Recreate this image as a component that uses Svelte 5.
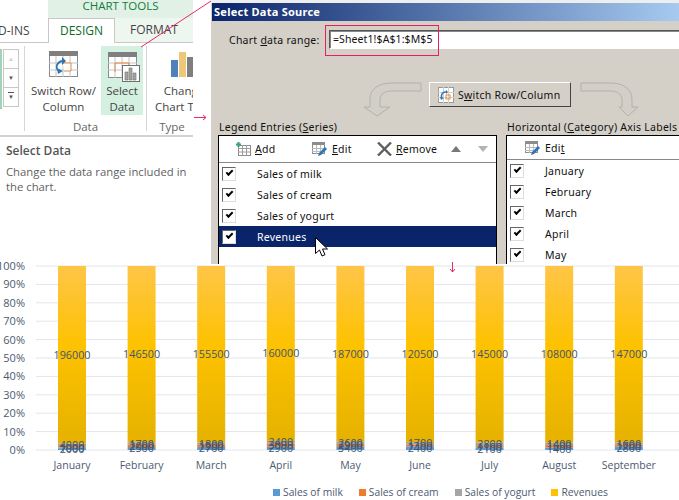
<script lang="ts">
	const months = [
		{ name: 'January', milk: 2000, cream: 1000, yogurt: 4000, rev: 196000 },
		{ name: 'February', milk: 2500, cream: 2000, yogurt: 1700, rev: 146500 },
		{ name: 'March', milk: 2700, cream: 1900, yogurt: 1800, rev: 155500 },
		{ name: 'April', milk: 2900, cream: 3000, yogurt: 2400, rev: 160000 },
		{ name: 'May', milk: 3400, cream: 2900, yogurt: 2600, rev: 187000 },
		{ name: 'June', milk: 2400, cream: 1300, yogurt: 1700, rev: 120500 },
		{ name: 'July', milk: 2100, cream: 1100, yogurt: 2800, rev: 145000 },
		{ name: 'August', milk: 1400, cream: 1600, yogurt: 1400, rev: 108000 },
		{ name: 'September', milk: 2800, cream: 1700, yogurt: 1600, rev: 147000 }
	];
	const top = 266;
	const h = 184;
	const bars = months.map((m, i) => {
		const total = m.milk + m.cream + m.yogurt + m.rev;
		const px = (v: number) => (v / total) * h;
		const milk = px(m.milk), cream = px(m.cream), yogurt = px(m.yogurt);
		return {
			...m,
			x: 58 + i * 69.6,
			milkH: milk, creamH: cream, yogurtH: yogurt,
			revH: h - milk - cream - yogurt
		};
	});
	const ticks = [100, 90, 80, 70, 60, 50, 40, 30, 20, 10, 0];
	const legend = [
		{ label: 'Sales of milk', color: '#5b9bd5' },
		{ label: 'Sales of cream', color: '#ed7d31' },
		{ label: 'Sales of yogurt', color: '#a5a5a5' },
		{ label: 'Revenues', color: '#ffc000' }
	];
	const series = ['Sales of milk', 'Sales of cream', 'Sales of yogurt', 'Revenues'];
	const cats = ['January', 'February', 'March', 'April', 'May'];
</script>

<div class="page">
	<svg class="chart" width="679" height="236" viewBox="0 264 679 236">
		<defs>
			<linearGradient id="rev" x1="0" y1="0" x2="0" y2="1">
				<stop offset="0" stop-color="#ffc548"/>
				<stop offset=".45" stop-color="#fdc200"/>
				<stop offset="1" stop-color="#e6b200"/>
			</linearGradient>
		</defs>
		{#each ticks as t, i}
			<line x1="36" x2="679" y1={top + i * 18.4} y2={top + i * 18.4} stroke="#e1e5ec" stroke-width="1"/>
			<text class="tick" x="25" y={top + i * 18.4 + 4} text-anchor="end">{t}%</text>
		{/each}
		{#each bars as b}
			<rect x={b.x} y={top} width="28" height={b.revH} fill="url(#rev)"/>
			<rect x={b.x} y={top + b.revH} width="28" height={b.yogurtH} fill="#a5a5a5"/>
			<rect x={b.x} y={top + b.revH + b.yogurtH} width="28" height={b.creamH} fill="#ed7d31"/>
			<rect x={b.x} y={top + b.revH + b.yogurtH + b.creamH} width="28" height={b.milkH} fill="#5b9bd5"/>
			<text class="lab" x={b.x + 14} y={top + b.revH / 2 + 4}>{b.rev}</text>
			<text class="lab" x={b.x + 14} y={top + b.revH + b.yogurtH / 2 + 4}>{b.yogurt}</text>
			<text class="lab" x={b.x + 14} y={top + b.revH + b.yogurtH + b.creamH / 2 + 4}>{b.cream}</text>
			<text class="lab" x={b.x + 14} y={top + h - b.milkH / 2 + 4}>{b.milk}</text>
			<text class="cat" x={b.x + 14} y="469">{b.name}</text>
		{/each}
	</svg>

	<div class="top">
		<div class="ribbon">
			<div class="context">CHART TOOLS</div>
			<div class="tabs">
				<span class="tab-cut">D-INS</span>
				<span class="tab-on">DESIGN</span>
				<span class="tab-off">FORMAT</span>
			</div>
			<div class="groups">
				<div class="gallery">
					<div class="swatch"></div>
					<div class="scroll">
						<span class="sb">▲</span>
						<span class="sb dark">▼</span>
						<span class="sb dark more">▼</span>
					</div>
				</div>
				<div class="group data">
					<div class="btns">
						<div class="btn">
							<svg width="30" height="27" viewBox="0 0 30 27">
								<rect x=".5" y=".5" width="28" height="25" fill="#fff" stroke="#8a8a8a"/>
								<rect x="0" y="0" width="29" height="5" fill="#7f7f7f"/>
								<path d="M0 12h29M0 19h29M7 5v21M14 5v21M21 5v21" stroke="#c4c4c4"/>
								<path d="M14 12h8v8h-7" fill="#fff" stroke="#e8893a"/>
								<path d="M12 20c-4 0-5-3-4-6 1-2 2-4 6-4" fill="none" stroke="#2e75b6" stroke-width="1.800"/>
								<path d="M13 6l4 4-4 4zM8 17l6 3-5 3z" fill="#2e75b6"/>
							</svg>
							<span>Switch Row/<br/>Column</span>
						</div>
						<div class="btn active">
							<svg class="sel-ico" width="32" height="30" viewBox="0 0 32 30">
								<rect x=".5" y=".5" width="28" height="25" fill="#fff" stroke="#8a8a8a"/>
								<rect x="0" y="0" width="29" height="5" fill="#7f7f7f"/>
								<path d="M0 11h29M0 18h29M7 5v21M14 5v21M21 5v21" stroke="#c4c4c4"/>
								<path d="M7 20v-9h14v5" fill="none" stroke="#e8893a"/>
								<rect x="14.500" y="13.500" width="17" height="16" fill="#fff" stroke="#6f6f6f"/>
								<path d="M17 28v-8h3v8zM21 28V16h3v12zM25 28v-7h3v7z" fill="#a6a6a6" stroke="#6f6f6f" stroke-width=".6"/>
							</svg>
							<span>Select<br/>Data</span>
						</div>
					</div>
					<div class="group-name">Data</div>
				</div>
				<div class="group type">
					<div class="btn clip">
						<svg width="27" height="27" viewBox="0 0 27 27">
							<rect x="0" y="9" width="7" height="17" fill="#4f81bd"/>
							<rect x="8" y="1" width="7" height="25" fill="#edc87a"/>
							<rect x="16" y="6" width="7" height="20" fill="#7f7f7f"/>
						</svg>
						<span>Change<br/>Chart Type</span>
					</div>
					<div class="group-name type-name">Type</div>
				</div>
			</div>
			<div class="tip">
				<b>Select Data</b>
				<p>Change the data range included in the chart.</p>
			</div>
		</div>

		<div class="dialog">
			<div class="title">Select Data Source</div>
			<div class="range">
				<label for="rng">Chart <u>d</u>ata range:</label>
				<div class="input" id="rng">=Sheet1!$A$1:$M$5</div>
			</div>
			<div class="switch-row">
				<button class="switch">
					<svg width="16" height="16" viewBox="0 0 16 16">
						<rect x=".5" y=".5" width="15" height="15" fill="#fff" stroke="#9a9a9a"/>
						<path d="M0 5.500h16M0 10.500h16M5.500 0v16M10.500 0v16" stroke="#d0d0d0"/>
						<path d="M4 11a4 4 0 0 1 4-6" fill="none" stroke="#2e75b6" stroke-width="1.500"/>
						<path d="M8 3l2 2-2 2zM2 10l4 1-3 2z" fill="#2e75b6"/>
						<rect x="8" y="8" width="4" height="4" fill="none" stroke="#e8893a"/>
					</svg>
					<span>S<u>w</u>itch Row/Column</span>
				</button>
			</div>
			<div class="lists">
				<section class="col-left">
					<h4>Legend Entries (<u>S</u>eries)</h4>
					<div class="box">
						<div class="tools">
							<span class="tool">
								<svg width="15" height="15" viewBox="0 0 15 15">
									<rect x="2.500" y="3.500" width="12" height="10" fill="#fff" stroke="#8c8c8c"/>
									<path d="M2 6.500h12M2 10h12M6.500 3v11M10.500 3v11" stroke="#9c9c9c"/>
									<path d="M0 2.500h5M2.500 0v5" stroke="#3aa07a" stroke-width="2"/>
								</svg>
								<span><u>A</u>dd</span>
							</span>
							<span class="tool">
								<svg width="16" height="16" viewBox="0 0 16 16">
									<rect x=".5" y="1.500" width="12" height="11" fill="#fff" stroke="#8c8c8c"/>
									<rect x="0" y="1" width="13" height="3" fill="#8c8c8c"/>
									<path d="M0 7.500h12M0 10.500h12M4.500 4v9M8.500 4v9" stroke="#bbb"/>
									<path d="M6 15l1-3 6-6 2 2-6 6z" fill="#2e75b6"/>
								</svg>
								<span><u>E</u>dit</span>
							</span>
							<span class="tool">
								<svg width="15" height="14" viewBox="0 0 15 14">
									<path d="M1 0.500l13 13M14 0.500l-13 13" stroke="#5f5f5f" stroke-width="2.400"/>
								</svg>
								<span><u>R</u>emove</span>
							</span>
							<span class="tri up"></span>
							<span class="tri down"></span>
						</div>
						<ul>
							{#each series as s}
								<li class:sel={s === 'Revenues'}><span class="chk"></span>{s}</li>
							{/each}
						</ul>
						<svg class="cursor" width="13" height="21" viewBox="0 0 13 21">
							<path d="M.5.500v16l4-3.500 2.500 6 3-1.300-2.500-5.700h5z" fill="#fff" stroke="#000"/>
						</svg>
					</div>
				</section>
				<section class="col-right">
					<h4>Horizontal (<u>C</u>ategory) Axis Labels</h4>
					<div class="box">
						<div class="tools short">
							<span class="tool">
								<svg width="16" height="16" viewBox="0 0 16 16">
									<rect x=".5" y="1.500" width="12" height="11" fill="#fff" stroke="#8c8c8c"/>
									<rect x="0" y="1" width="13" height="3" fill="#8c8c8c"/>
									<path d="M0 7.500h12M0 10.500h12M4.500 4v9M8.500 4v9" stroke="#bbb"/>
									<path d="M6 15l1-3 6-6 2 2-6 6z" fill="#2e75b6"/>
								</svg>
								<span>Edi<u>t</u></span>
							</span>
						</div>
						<ul>
							{#each cats as c}
								<li><span class="chk"></span>{c}</li>
							{/each}
						</ul>
					</div>
				</section>
			</div>
			<svg class="bend" width="280" height="36" viewBox="0 0 280 36">
				<path d="M60 1v8H30c-7 0-11 4-11 9v7h10L16 34 3 25h6v-8C9 7 18 1 30 1z" fill="#d2cfc8" stroke="#b4b1aa"/>
				<path d="M220 1v8h30c7 0 11 4 11 9v7h-3l9 9 10-9h-6v-8c0-10-9-16-21-16z" fill="#d2cfc8" stroke="#b4b1aa"/>
			</svg>
		</div>
	</div>

	<div class="legend">
		{#each legend as l}
			<span class="key"><i style="background:{l.color}"></i>{l.label}</span>
		{/each}
	</div>

	<!-- pink annotations drawn over the collage -->
	<svg class="notes" width="679" height="500" viewBox="0 0 679 500">
		<path d="M211 1L141 47" stroke="#e6296f" fill="none"/>
		<path d="M194 117.500h12M203 115l3 2.500-3 2.500" stroke="#e6296f" fill="none"/>
		<path d="M452.500 262v10M450 269l2.500 3 2.500-3" stroke="#e6296f" fill="none"/>
		<rect x="325.500" y="25.500" width="113" height="30" fill="none" stroke="#e6205f"/>
	</svg>
</div>

<style>
	:global(body) { background: #fff; }
	.page { position: relative; width: 679px; height: 500px; overflow: hidden; background: #fff; font-family: "Open Sans", sans-serif; }
	.top { position: relative; display: flex; height: 264px; }

	/* ribbon */
	.ribbon { width: 193px; margin-right: 18px; flex: none; color: #444; font-size: 11.500px; overflow: hidden; }
	.context { margin-left: 48px; height: 18px; line-height: 11px; background: #e1f1e5; color: #107c41; font-size: 11.500px; text-align: center; overflow: hidden; }
	.tabs { display: flex; height: 25px; align-items: center; border-bottom: 1px solid #c8c8c8; position: relative; box-sizing: border-box; }
	.tab-cut { width: 48px; font-size: 12px; text-indent: -2px; flex: none; }
	.tab-on { width: 67px; height: 25px; line-height: 24px; text-align: center; color: #0e6b1f; background: #fff; border: 1px solid #c8c8c8; border-bottom: none; box-sizing: border-box; position: relative; top: 0; font-size: 12px; flex: none; }
	.tab-off { flex: 1; height: 24px; line-height: 24px; text-align: center; background: #edf6ef; font-size: 12px; }
	.groups { display: flex; height: 92px; border-bottom: 2px solid #d2d2d2; box-sizing: content-box; }
	.gallery { width: 25px; height: 85px; flex: none; display: flex; box-sizing: border-box; border-right: 1px solid #d6d6d6; margin-top: 3px; padding-top: 3px; }
	.swatch { width: 2px; height: 58px; background: #9fd4b8; border: solid #bbb; border-width: 1px 0; }
	.scroll { width: 16px; height: 58px; margin-left: 1px; display: flex; flex-direction: column; border: 1px solid #c8c8c8; box-sizing: border-box; }
	.sb { flex: 1; font-size: 6px; line-height: 18px; text-align: center; color: #cfcfcf; border-bottom: 1px solid #c8c8c8; }
	.sb.dark { color: #555; }
	.sb.more { border-bottom: none; text-decoration: overline; }
	.group { display: flex; flex-direction: column; }
	.data { width: 122px; flex: none; box-sizing: border-box; border-right: 1px solid #d6d6d6; height: 85px; margin-top: 3px; }
	.btns { display: flex; gap: 4px; padding-left: 5px; height: 69px; flex: none; }
	.btn { display: flex; flex-direction: column; align-items: center; line-height: 16px; text-align: center; white-space: nowrap; padding-top: 5px; box-sizing: border-box; height: 69px; }
	.btn svg { flex: none; margin-bottom: 5px; }
	.btn .sel-ico { margin-bottom: 1px; margin-top: 1px; margin-left: 3px; }
	.btn:first-child { width: 67px; }
	.btn.active { width: 42px; background: #d3f0e0; }
	.group-name { text-align: center; line-height: 16px; font-size: 11.500px; color: #666; margin-top: 4px; }
	.type { flex: 1; height: 85px; margin-top: 3px; }
	.btn.clip { width: 74px; }
	.type-name { width: 50px; }
	.tip { padding: 6px 6px; }
	.tip b { display: block; font-size: 12px; line-height: 16px; font-weight: 600; color: #555; margin-bottom: 5px; }
	.tip p { margin: 0; font-size: 11.300px; line-height: 15px; color: #5f5f5f; width: 186px; }

	/* dialog */
	.dialog { flex: 1; min-width: 0; position: relative; background: #d4d0c8; box-sizing: border-box; border-top: 3px solid #eee; overflow: hidden; font-family: "Noto Sans", sans-serif; font-size: 10.500px; color: #111; padding-left: 1px; letter-spacing: .25px; }
	.title { height: 18px; line-height: 17px; padding-left: 2px; background: linear-gradient(90deg, #0a246a, #a6caf0); color: #fff; font-weight: 700; font-size: 11px; }
	.range { display: flex; align-items: center; margin: 9px 0 0 17px; }
	.range label { width: 100px; flex: none; }
	.input { flex: 1; height: 19px; line-height: 17px; margin-right: -2px; background: #fff; padding-left: 3px; box-sizing: border-box; border: 1px solid; border-color: #555 #fff #fff #555; box-shadow: inset 1px 1px 0 #888; font-size: 10.500px; letter-spacing: .1px; }
	.switch-row { display: flex; margin: 33px 0 0 217px; }
	.switch { display: flex; align-items: center; gap: 4px; width: 142px; height: 25px; padding: 0 0 0 8px; background: #d4d0c8; border: 1px solid; border-color: #fff #444 #444 #fff; font: inherit; color: inherit; letter-spacing: inherit; box-sizing: border-box; }
	.lists { display: flex; gap: 9px; margin: 13px 0 0 6px; }
	h4 { margin: 0; padding-left: 1px; font-weight: 400; font-size: 10.500px; line-height: 15px; white-space: nowrap; }
	.col-left { width: 279px; flex: none; }
	.col-right { width: 180px; flex: none; }
	.box { position: relative; background: #fff; border: 1px solid #000; border-bottom: none; height: 130px; overflow: hidden; box-sizing: border-box; }
	.tools { display: grid; grid-template-columns: 76px 65px 74px 27px 10px; align-items: center; height: 26px; padding-left: 17px; border-bottom: 1px solid #888; }
	.tools.short { display: flex; height: 23px; padding-left: 18px; }
	.tool { display: flex; align-items: center; gap: 4px; }
	.tri { width: 0; height: 0; border-left: 5px solid transparent; border-right: 5px solid transparent; }
	.tri.up { border-bottom: 6px solid #777; }
	.tri.down { border-top: 6px solid #b4b4b4; }
	ul { list-style: none; margin: 0; padding: 0; }
	li { display: flex; align-items: center; height: 21px; padding-left: 3px; white-space: nowrap; }
	li.sel { background: #0a246a; color: #fff; }
	.chk { position: relative; width: 12px; height: 12px; margin-right: 21px; background: #fff; border: 1px solid; border-color: #666 #ddd #ddd #666; flex: none; }
	.chk::after { content: ""; position: absolute; left: 3px; top: 2px; width: 5px; height: 2px; border: solid #000; border-width: 0 0 2px 2px; transform: rotate(-45deg); }
	.cursor { position: absolute; left: 96px; top: 101px; }
	.bend { position: absolute; left: 150px; top: 79px; }

	/* chart */
	.chart { display: block; position: absolute; left: 0; top: 264px; overflow: visible; font-family: "Open Sans", sans-serif; }
	.tick { font-size: 11px; fill: #4d5a70; }
	.lab { font-size: 10.800px; fill: #44546a; text-anchor: middle; }
	.cat { font-size: 10.500px; fill: #4d5a70; text-anchor: middle; }
	.legend { position: absolute; left: 273px; top: 485px; display: flex; gap: 16px; font-size: 10.300px; color: #4d5a70; line-height: 14px; font-family: "Open Sans", sans-serif; }
	.key { display: flex; align-items: center; gap: 3px; }
	.key i { width: 7px; height: 7px; }
	.notes { position: absolute; left: 0; top: 0; pointer-events: none; }
</style>
